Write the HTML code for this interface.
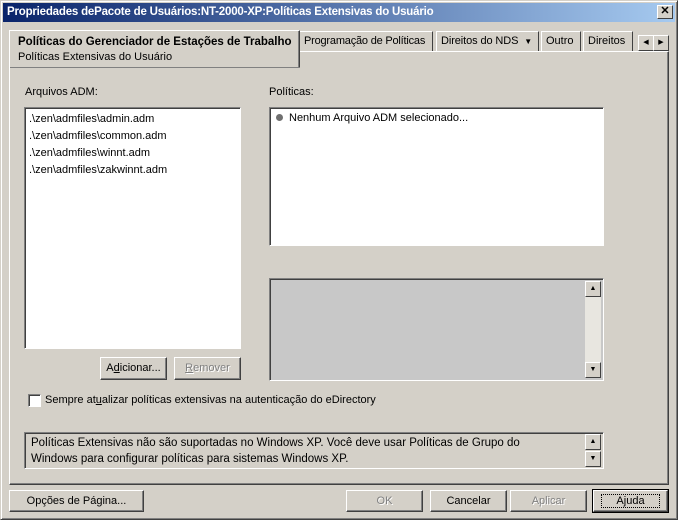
<!DOCTYPE html>
<html><head><style>
*{box-sizing:border-box;margin:0;padding:0}
body{width:678px;height:520px;background:#d4d0c8;font-family:"Liberation Sans",sans-serif;font-size:11px;color:#000;position:relative;overflow:hidden;white-space:nowrap}
.a{position:absolute}
.win{left:0;top:0;width:678px;height:520px;border:1px solid;border-color:#d4d0c8 #404040 #404040 #d4d0c8;box-shadow:inset 1px 1px #fff,inset -1px -1px #808080}
.title{left:3px;top:3px;width:672px;height:19px;background:linear-gradient(90deg,#0a246a,#a6caf0);color:#fff;font-weight:bold;font-size:11.5px;line-height:19px;padding-left:4px;letter-spacing:-0.2px}
.x{right:5px;top:5px;width:16px;height:14px;background:#d4d0c8;border:1px solid;border-color:#fff #404040 #404040 #fff;font-size:11px;line-height:11px;text-align:center;font-weight:bold;color:#000}
.sunk{border:1px solid;border-color:#808080 #fff #fff #808080;box-shadow:inset 1px 1px #404040}
.btn{border:1px solid;border-color:#fff #404040 #404040 #fff;box-shadow:inset -1px -1px #808080;text-align:center;line-height:20px}
.dis{color:#808080;text-shadow:1px 1px #fff}
.tab{top:31px;height:21px;border:1px solid;border-bottom:none;border-color:#fff #404040 #404040 #fff;line-height:19px;padding:0 4px;background:#d4d0c8;overflow:hidden}
.sb{width:16px;height:16px;background:#d4d0c8;border:1px solid;border-color:#fff #404040 #404040 #fff;font-size:7px;text-align:center;line-height:14px}
</style></head><body>
<div class="a win"></div>
<div class="a title">Propriedades dePacote de Usuários:NT-2000-XP:Políticas Extensivas do Usuário</div>
<div class="a x">✕</div>
<div class="a" style="left:9px;top:51px;width:660px;height:434px;border:1px solid;border-color:#fff #404040 #404040 #fff;box-shadow:inset -1px -1px #808080"></div>
<div class="a tab" style="left:299px;width:134px;letter-spacing:-0.2px">Programação de Políticas</div>
<div class="a tab" style="left:436px;width:103px;letter-spacing:-0.1px">Direitos do NDS&nbsp; <span style="font-size:8px">▼</span></div>
<div class="a tab" style="left:541px;width:40px">Outro</div>
<div class="a tab" style="left:583px;width:50px">Direitos</div>
<div class="a sb" style="left:638px;top:35px">◀</div>
<div class="a sb" style="left:653px;top:35px">▶</div>
<div class="a" style="left:9px;top:30px;width:291px;height:38px;background:#d4d0c8;border:1px solid;border-bottom:none;border-color:#fff #404040 #404040 #fff;box-shadow:inset -1px 0 #808080;padding:4px 0 0 8px;line-height:15px"><b style="font-size:11.5px">Políticas do Gerenciador de Estações de Trabalho</b><br>Políticas Extensivas do Usuário</div>
<div class="a" style="left:10px;top:67px;width:290px;height:1px;background:#808080"></div>
<div class="a" style="left:300px;top:51px;width:368px;height:1px;background:#fff"></div>

<div class="a" style="left:25px;top:86px">Arquivos ADM:</div>
<div class="a sunk" style="left:24px;top:107px;width:217px;height:242px;background:#fff;padding:3px 4px;line-height:17px">.\zen\admfiles\admin.adm<br>.\zen\admfiles\common.adm<br>.\zen\admfiles\winnt.adm<br>.\zen\admfiles\zakwinnt.adm</div>
<div class="a" style="left:269px;top:86px">Políticas:</div>
<div class="a sunk" style="left:269px;top:107px;width:335px;height:139px;background:#fff;padding:4px 6px"><span style="display:inline-block;width:7px;height:7px;border-radius:50%;background:#707070;margin-right:6px"></span>Nenhum Arquivo ADM selecionado...</div>
<div class="a sunk" style="left:269px;top:278px;width:335px;height:103px;background:#c8c8c8"></div>
<div class="a sb" style="left:585px;top:281px">▲</div>
<div class="a" style="left:585px;top:297px;width:16px;height:65px;background:#e8e6e0"></div>
<div class="a sb" style="left:585px;top:362px">▼</div>

<div class="a btn" style="left:100px;top:357px;width:67px;height:23px">A<u>d</u>icionar...</div>
<div class="a btn dis" style="left:174px;top:357px;width:67px;height:23px"><u>R</u>emover</div>

<div class="a sunk" style="left:28px;top:394px;width:13px;height:13px;background:#fff"></div>
<div class="a" style="left:45px;top:394px">Sempre at<u>u</u>alizar políticas extensivas na autenticação do eDirectory</div>

<div class="a sunk" style="left:24px;top:432px;width:580px;height:37px;padding:2px 6px;line-height:16px;font-size:11.5px">Políticas Extensivas não são suportadas no Windows XP. Você deve usar Políticas de Grupo do<br>Windows para configurar políticas para sistemas Windows XP.</div>
<div class="a sb" style="left:585px;top:434px">▲</div>
<div class="a sb" style="left:585px;top:451px">▼</div>

<div class="a btn" style="left:9px;top:490px;width:135px;height:22px">Opções de Pá<u>g</u>ina...</div>
<div class="a btn dis" style="left:346px;top:490px;width:77px;height:22px">OK</div>
<div class="a btn" style="left:430px;top:490px;width:77px;height:22px">Cancelar</div>
<div class="a btn dis" style="left:510px;top:490px;width:77px;height:22px">Aplicar</div>
<div class="a" style="left:592px;top:489px;width:77px;height:24px;border:1px solid #000"></div>
<div class="a btn" style="left:593px;top:490px;width:75px;height:22px"><span style="border:1px dotted #000;padding:0 14px">A<u>j</u>uda</span></div>
</body></html>
